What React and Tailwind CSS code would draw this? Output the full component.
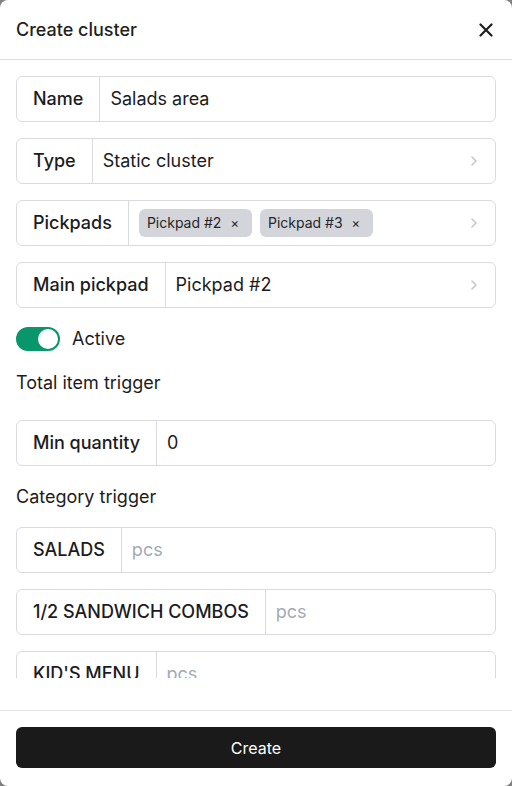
import React from "react";

const font = { fontFamily: "Inter, 'Noto Sans', sans-serif" };

function Chevron() {
  return (
    <svg width="10" height="14" viewBox="0 0 10 14" className="shrink-0">
      <path d="M3 3 L7 7 L3 11" fill="none" stroke="#c4c7cc" strokeWidth="1.6" strokeLinecap="round" strokeLinejoin="round" />
    </svg>
  );
}

function Field({ label, children, chevron }) {
  return (
    <div className="flex h-[46px] shrink-0 items-stretch rounded-md border border-[#d9dbe0] bg-white">
      <div className="flex items-center border-r border-[#d9dbe0] pl-4 pr-4 text-[18px] font-medium leading-[24px] text-[#1c1c1e]">
        {label}
      </div>
      <div className="flex min-w-0 flex-1 items-center pl-[10px] pr-4 text-[18px] leading-[24px] text-[#1c1c1e]">
        <div className="flex min-w-0 flex-1 items-center">{children}</div>
        {chevron && <Chevron />}
      </div>
    </div>
  );
}

function Chip({ text }) {
  return (
    <div className="flex h-[28px] items-center gap-[9px] rounded-md bg-[#d3d5da] pl-2 pr-[13px] text-[14px] leading-[20px] text-[#26262a]">
      <span>{text}</span>
      <span className="text-[13px]">×</span>
    </div>
  );
}

export default function App() {
  return (
    <div className="h-[786px] w-[512px] bg-[#808080]" style={font}>
      <div className="flex h-full w-full flex-col overflow-hidden rounded-lg bg-white">
        <div className="flex h-[60px] shrink-0 items-center justify-between border-b border-[#dcdde1] pl-4 pr-[19px]">
          <span className="text-[18px] font-medium text-[#1f1f21]">Create cluster</span>
          <svg width="14" height="14" viewBox="0 0 14 14">
            <path d="M1.5 1.5 L12.5 12.5 M12.5 1.5 L1.5 12.5" stroke="#1f1f21" strokeWidth="2.2" strokeLinecap="round" />
          </svg>
        </div>
        <div className="flex min-h-0 flex-1 flex-col px-4 pb-8 pt-4">
          <div className="flex min-h-0 flex-1 flex-col overflow-hidden">
            <div className="flex flex-col gap-4">
              <Field label="Name">Salads area</Field>
              <Field label="Type" chevron>Static cluster</Field>
              <Field label="Pickpads" chevron>
                <div className="flex gap-2">
                  <Chip text="Pickpad #2" />
                  <Chip text="Pickpad #3" />
                </div>
              </Field>
              <Field label="Main pickpad" chevron>Pickpad #2</Field>
            </div>
            <div className="mt-[19px] flex h-[24px] shrink-0 items-center gap-3">
              <div className="flex h-[24px] w-[44px] items-center justify-end rounded-full bg-[#08966a] pr-[2px]">
                <div className="h-[20px] w-[20px] rounded-full bg-white" />
              </div>
              <span className="text-[18px] leading-[24px] text-[#1c1c1e]">Active</span>
            </div>
            <div className="mt-[20px] shrink-0 text-[18px] leading-[24px] text-[#1c1c1e]">Total item trigger</div>
            <div className="mt-[25px] flex flex-col gap-4">
              <Field label="Min quantity">0</Field>
            </div>
            <div className="mt-[19px] shrink-0 text-[18px] leading-[24px] text-[#1c1c1e]">Category trigger</div>
            <div className="mt-[18px] flex flex-col gap-4">
              <Field label="SALADS"><span className="text-[#a4a9b3]">pcs</span></Field>
              <Field label="1/2 SANDWICH COMBOS"><span className="text-[#a4a9b3]">pcs</span></Field>
              <Field label="KID'S MENU"><span className="text-[#a4a9b3]">pcs</span></Field>
            </div>
          </div>
        </div>
        <div className="shrink-0 border-t border-[#e3e4e8] px-4 pb-[18px] pt-4">
          <button className="flex h-[41px] w-full items-center justify-center rounded-md bg-[#1a1a1a] text-[16px] text-white">
            Create
          </button>
        </div>
      </div>
    </div>
  );
}
